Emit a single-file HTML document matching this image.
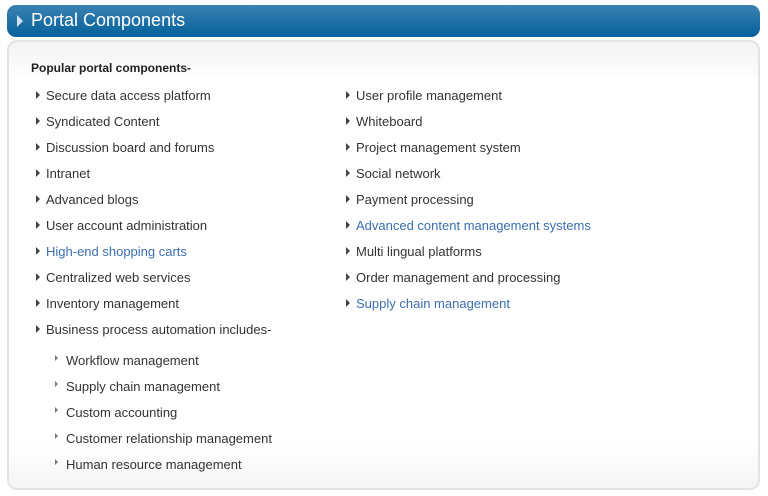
<!DOCTYPE html>
<html><head><style>
body{margin:0;width:768px;height:496px;background:#fff;font-family:"Liberation Sans",Arial,sans-serif;position:relative;overflow:hidden}
.hd{position:absolute;left:7px;top:5px;width:753px;height:32px;border-radius:9px;background:linear-gradient(#3c82b2,#04609b);}
.hd span{position:absolute;left:24px;top:5px;color:#fff;font-size:18px;}
.hd i{position:absolute;left:10px;top:10px;width:0;height:0;border-left:6px solid #cfe3f2;border-top:6px solid transparent;border-bottom:6px solid transparent}
.pn{position:absolute;left:7px;top:40px;width:749px;height:446px;border:2px solid #e3e3e3;border-radius:10px;background:linear-gradient(#f3f3f3,#fff 40px,#fff 400px,#f5f5f5);}
.t{position:absolute;font-size:13px;color:#333;white-space:nowrap}
.b{font-weight:bold;font-size:12px;color:#222}
.l{color:#3c6fae}
.a:before{content:"";position:absolute;left:-10px;top:3px;border-left:4px solid #444;border-top:4px solid transparent;border-bottom:4px solid transparent}
.s:before{content:"";position:absolute;left:-11px;top:2px;border-left:3px solid #777;border-top:3px solid transparent;border-bottom:3px solid transparent}
</style></head><body>
<div class="hd"><i></i><span>Portal Components</span></div>
<div class="pn"></div>
<div class="t b" style="left:31px;top:61px">Popular portal components-</div>
<div class="t a" style="left:46px;top:88px">Secure data access platform</div>
<div class="t a" style="left:46px;top:114px">Syndicated Content</div>
<div class="t a" style="left:46px;top:140px">Discussion board and forums</div>
<div class="t a" style="left:46px;top:166px">Intranet</div>
<div class="t a" style="left:46px;top:192px">Advanced blogs</div>
<div class="t a" style="left:46px;top:218px">User account administration</div>
<div class="t a l" style="left:46px;top:244px">High-end shopping carts</div>
<div class="t a" style="left:46px;top:270px">Centralized web services</div>
<div class="t a" style="left:46px;top:296px">Inventory management</div>
<div class="t a" style="left:46px;top:322px">Business process automation includes-</div>
<div class="t s" style="left:66px;top:353px">Workflow management</div>
<div class="t s" style="left:66px;top:379px">Supply chain management</div>
<div class="t s" style="left:66px;top:405px">Custom accounting</div>
<div class="t s" style="left:66px;top:431px">Customer relationship management</div>
<div class="t s" style="left:66px;top:457px">Human resource management</div>
<div class="t a" style="left:356px;top:88px">User profile management</div>
<div class="t a" style="left:356px;top:114px">Whiteboard</div>
<div class="t a" style="left:356px;top:140px">Project management system</div>
<div class="t a" style="left:356px;top:166px">Social network</div>
<div class="t a" style="left:356px;top:192px">Payment processing</div>
<div class="t a l" style="left:356px;top:218px">Advanced content management systems</div>
<div class="t a" style="left:356px;top:244px">Multi lingual platforms</div>
<div class="t a" style="left:356px;top:270px">Order management and processing</div>
<div class="t a l" style="left:356px;top:296px">Supply chain management</div>
</body></html>
